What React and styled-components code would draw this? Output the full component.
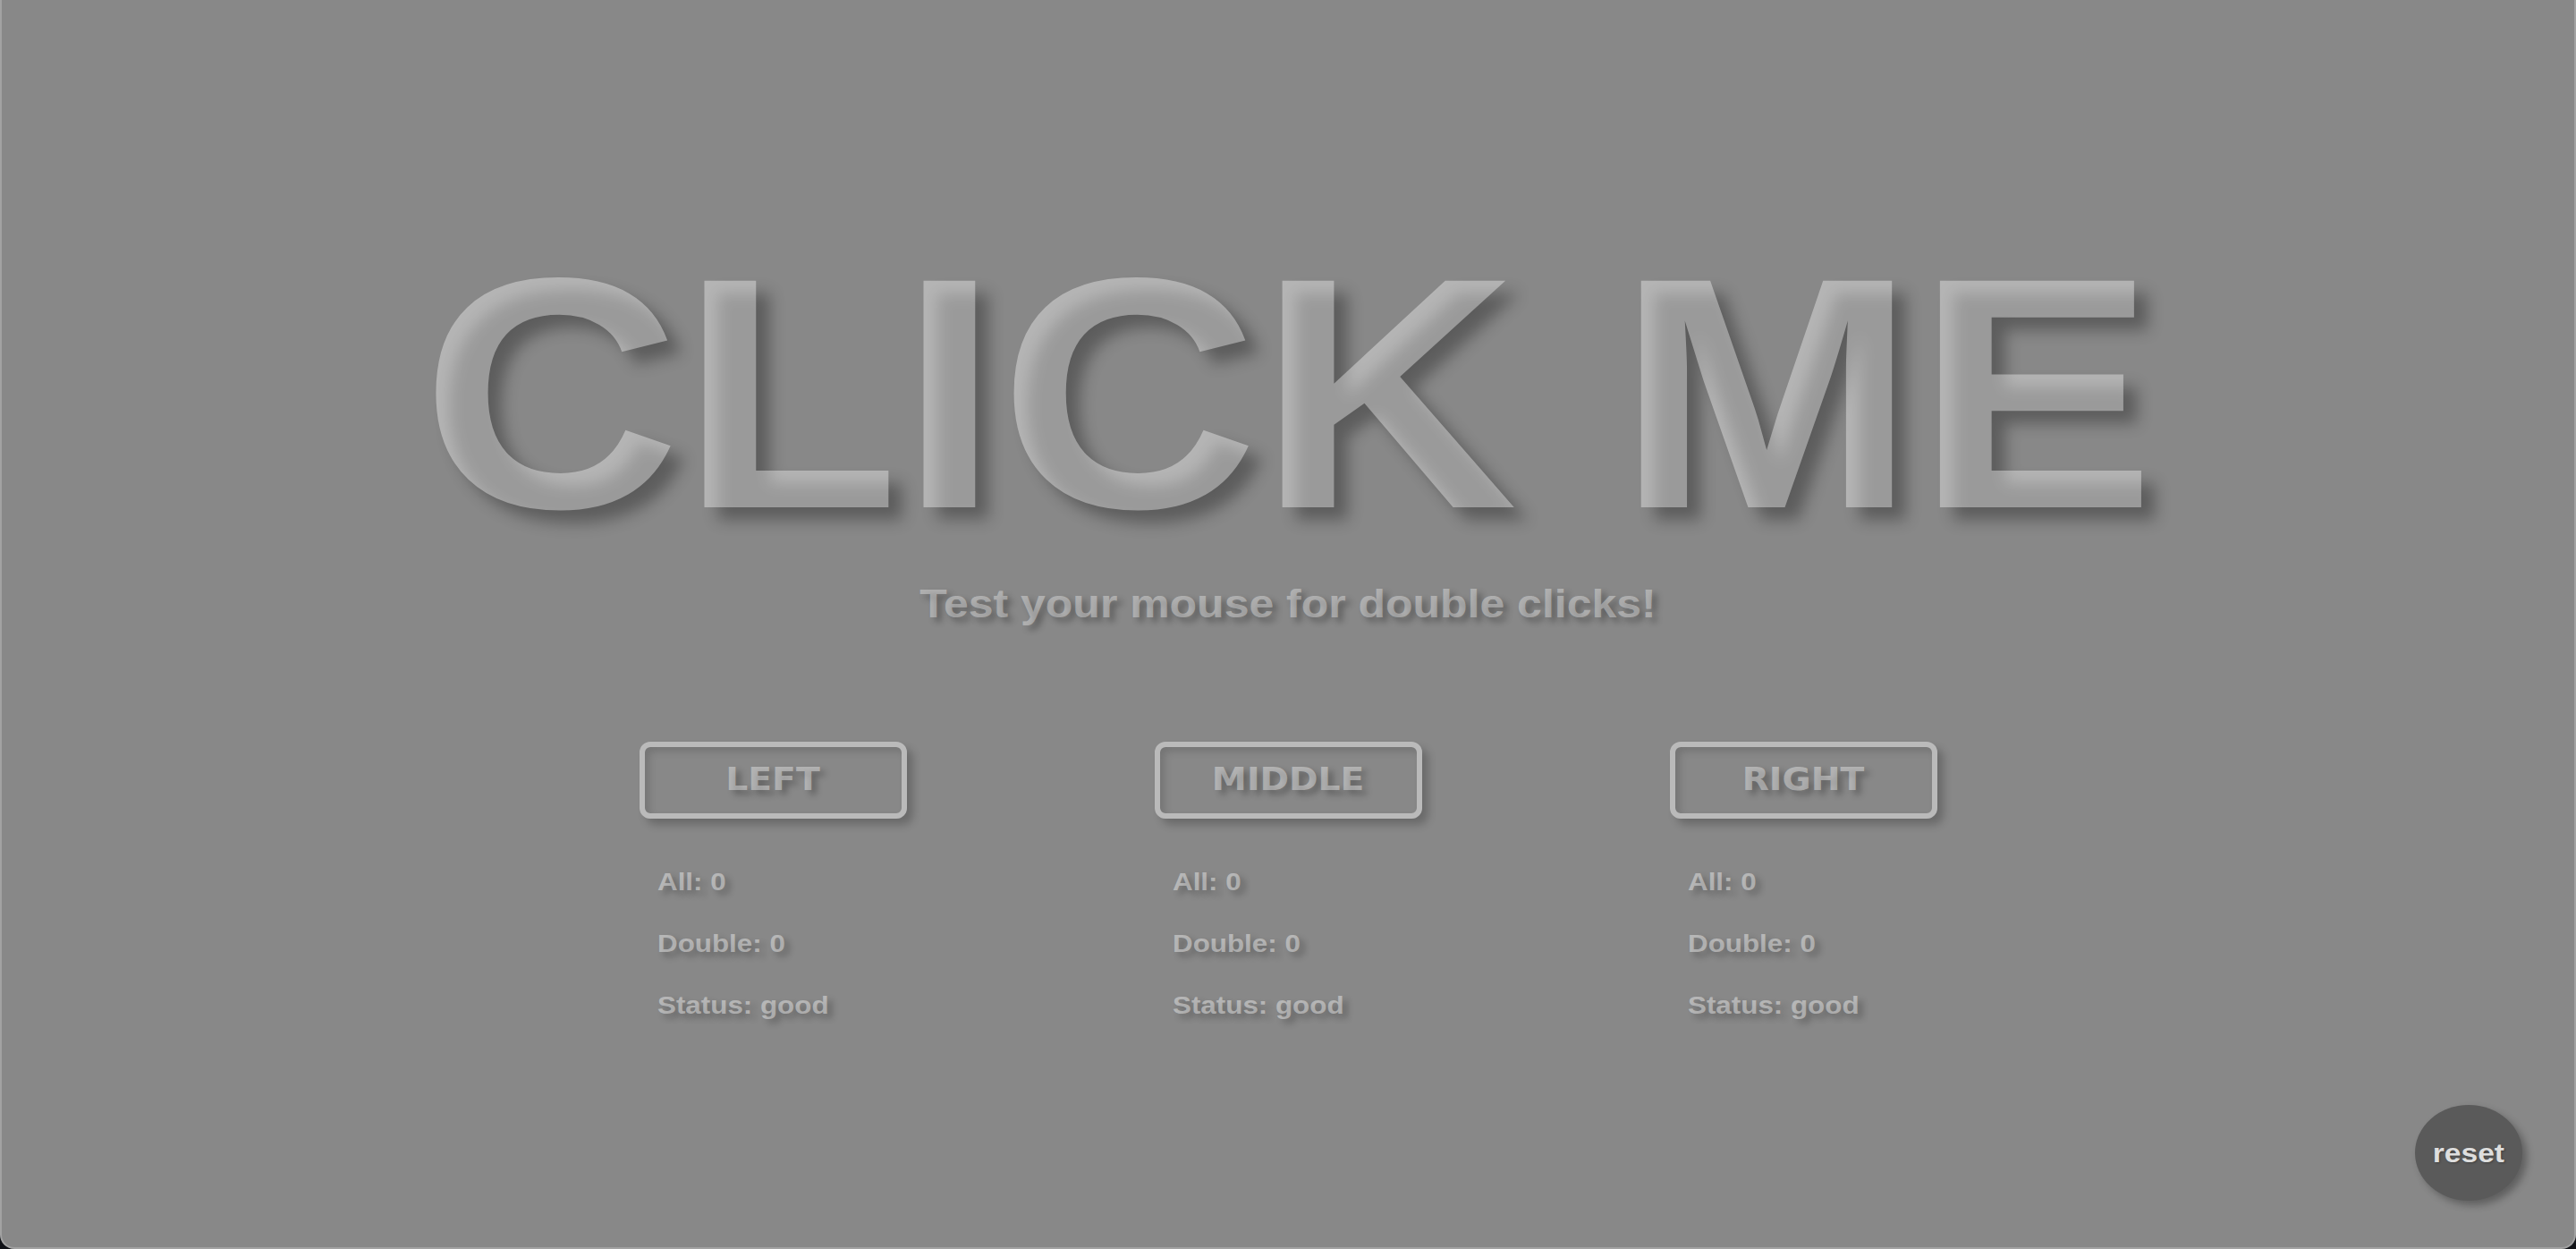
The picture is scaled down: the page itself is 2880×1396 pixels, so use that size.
import React, { useState } from 'react';
import styled, { createGlobalStyle, css } from 'styled-components';

const GlobalStyle = createGlobalStyle`
  html, body {
    margin: 0;
    padding: 0;
    background: #111318;
  }
  * {
    box-sizing: border-box;
  }
`;

const stretched = css`
  display: inline-block;
  transform: scaleX(1.12);
`;

const StyledPage = styled.div`
  position: relative;
  height: 1396px;
  background: #888888;
  border: 2px solid #a2a2a2;
  border-top: none;
  border-radius: 0 0 16px 16px;
  display: flex;
  flex-direction: column;
  align-items: center;
  font-family: "Liberation Sans", Arial, sans-serif;
  overflow: hidden;
`;

const StyledTitle = styled.h1`
  margin: 256px 0 0;
  font-size: 368px;
  line-height: 1;
  font-weight: 700;
  white-space: nowrap;
  color: rgba(255, 255, 255, 0.38);
  text-shadow: 14px 14px 16px rgba(0, 0, 0, 0.32);
  ${stretched}
  transform: scaleX(1.09);
  cursor: pointer;
  user-select: none;
`;

const StyledSubtitle = styled.p`
  margin: 25px 0 0;
  font-size: 45px;
  line-height: 1.15;
  font-weight: 700;
  color: rgba(255, 255, 255, 0.37);
  text-shadow: 5px 5px 7px rgba(0, 0, 0, 0.3);
  ${stretched}
  transform: scaleX(1.11);
`;

const StyledColumns = styled.div`
  display: flex;
  gap: 277px;
  margin-top: 128px;
`;

const StyledColumn = styled.div`
  width: 299px;
  display: flex;
  flex-direction: column;
`;

const StyledMouseButton = styled.button`
  height: 86px;
  width: 100%;
  background: transparent;
  border: 6px solid #bababa;
  border-radius: 12px;
  box-shadow: 7px 7px 10px rgba(0, 0, 0, 0.22), inset 5px 5px 9px rgba(0, 0, 0, 0.14);
  display: flex;
  align-items: center;
  justify-content: center;
  padding: 0;
  cursor: pointer;
`;

const StyledButtonLabel = styled.span`
  ${stretched}
  font-family: "DejaVu Sans", Verdana, sans-serif;
  font-weight: 700;
  font-size: 35px;
  line-height: 1;
  color: rgba(255, 255, 255, 0.4);
  text-shadow: 5px 5px 7px rgba(0, 0, 0, 0.28);
`;

const StyledStats = styled.div`
  display: flex;
  flex-direction: column;
  gap: 37px;
  margin-top: 54px;
  padding-left: 20px;
`;

const StyledStat = styled.div`
  font-size: 28.5px;
  line-height: 32px;
  font-weight: 700;
  white-space: nowrap;
  color: rgba(255, 255, 255, 0.42);
  text-shadow: 5px 5px 7px rgba(0, 0, 0, 0.28);
  ${stretched}
  transform: scaleX(1.1);
  transform-origin: left center;
  align-self: flex-start;
`;

const StyledReset = styled.button`
  position: absolute;
  right: 58px;
  bottom: 52px;
  width: 120px;
  height: 107px;
  border: none;
  border-radius: 50%;
  background: #5a5a5a;
  box-shadow: 5px 5px 9px rgba(0, 0, 0, 0.3);
  display: flex;
  align-items: center;
  justify-content: center;
  padding: 0;
  cursor: pointer;
`;

const StyledResetLabel = styled.span`
  ${stretched}
  font-family: "Liberation Sans", Arial, sans-serif;
  font-weight: 700;
  font-size: 30px;
  line-height: 1;
  color: #dedede;
  text-shadow: 1px 1px 2px rgba(0, 0, 0, 0.3);
`;

const names = ['left', 'middle', 'right'];
const emptyCounts = { left: { all: 0, double: 0 }, middle: { all: 0, double: 0 }, right: { all: 0, double: 0 } };

const App = () => {
  const [counts, setCounts] = useState(emptyCounts);

  const handleReset = () => setCounts(emptyCounts);

  return (
    <>
      <GlobalStyle />
      <StyledPage>
        <StyledTitle>CLICK ME</StyledTitle>
        <StyledSubtitle>Test your mouse for double clicks!</StyledSubtitle>

        <StyledColumns>
          {names.map((name) => (
            <StyledColumn key={name}>
              <StyledMouseButton>
                <StyledButtonLabel>{name.toUpperCase()}</StyledButtonLabel>
              </StyledMouseButton>
              <StyledStats>
                <StyledStat>All: {counts[name].all}</StyledStat>
                <StyledStat>Double: {counts[name].double}</StyledStat>
                <StyledStat>Status: {counts[name].double > 0 ? 'bad' : 'good'}</StyledStat>
              </StyledStats>
            </StyledColumn>
          ))}
        </StyledColumns>

        <StyledReset onClick={handleReset}>
          <StyledResetLabel>reset</StyledResetLabel>
        </StyledReset>
      </StyledPage>
    </>
  );
};

export default App;
